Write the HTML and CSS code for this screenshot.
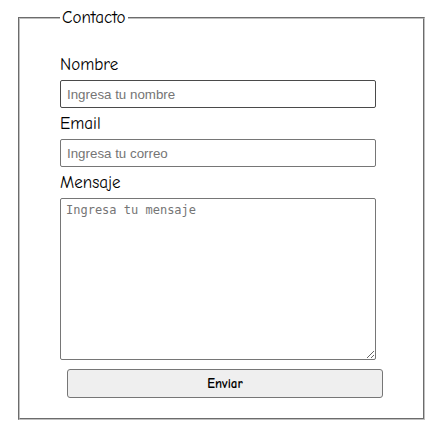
FILE: index.html
```html
<!DOCTYPE html>
<html lang="es">
<head>
<meta charset="utf-8">
<title>Contacto</title>
<link rel="stylesheet" href="styles.css">
</head>
<body>
<form class="contact-form">
  <fieldset class="contact-fieldset">
    <legend class="contact-legend">Contacto</legend>
    <label class="field-label" for="nombre">Nombre</label>
    <input class="field-input field-input--hover" id="nombre" type="text" placeholder="Ingresa tu nombre">
    <label class="field-label" for="email">Email</label>
    <input class="field-input" id="email" type="email" placeholder="Ingresa tu correo">
    <label class="field-label" for="mensaje">Mensaje</label>
    <textarea class="field-textarea" id="mensaje" placeholder="Ingresa tu mensaje"></textarea>
    <button class="submit-btn" type="submit">Enviar</button>
  </fieldset>
</form>
</body>
</html>
```
FILE: styles.css
```css
body {
  margin: 8px;
  background: #ffffff;
  font-family: "Comic Sans MS", "Comic Neue", "DejaVu Sans", sans-serif;
}

.contact-form {
  margin: 0;
}

.contact-fieldset {
  width: 316px;
  margin: 0 0 0 10px;
  padding: 25px 40px 20px;
  border: 2px groove #c0c0c0;
}

.contact-legend {
  padding: 0 2px;
  font-size: 17px;
  line-height: 20px;
  color: #000;
}

.field-label {
  display: block;
  height: 22px;
  margin-bottom: 5px;
  font-size: 17px;
  line-height: 24px;
  color: #000;
}

.field-input {
  display: block;
  box-sizing: border-box;
  width: 316px;
  height: 28px;
  margin: 0 0 4px;
  padding: 1px 6px;
  border: 1px solid #767676;
  border-radius: 2px;
  font-family: "Liberation Sans", Arial, sans-serif;
  font-size: 13.33px;
  color: #000;
}

.field-input--hover {
  border-color: #4a4a4a;
}

.field-input::placeholder,
.field-textarea::placeholder {
  color: #757575;
}

.field-textarea {
  display: block;
  box-sizing: border-box;
  width: 316px;
  height: 162px;
  margin: 0;
  padding: 4px 5px;
  border: 1px solid #767676;
  border-radius: 2px;
  font-family: "DejaVu Sans Mono", monospace;
  font-size: 12px;
}

.submit-btn {
  display: block;
  box-sizing: border-box;
  width: 316px;
  height: 29px;
  margin: 9px 0 0 7px;
  padding: 0;
  border: 1px solid #767676;
  border-radius: 3px;
  background: #efefef;
  font-family: "Comic Sans MS", "Comic Neue", "DejaVu Sans", sans-serif;
  font-size: 13px;
  font-weight: bold;
  color: #000;
}
```
